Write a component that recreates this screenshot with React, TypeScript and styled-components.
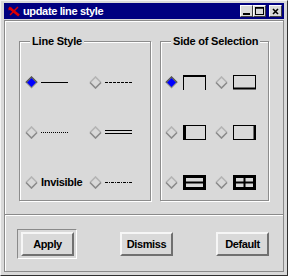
import styled, { createGlobalStyle } from "styled-components";

const GlobalStyle = createGlobalStyle`
  html, body {
    margin: 0;
    padding: 0;
    background: #d9d9d9;
  }
  body {
    font-family: "Liberation Sans", Arial, sans-serif;
  }
`;

const Window = styled.div`
  box-sizing: border-box;
  width: 288px;
  height: 276px;
  background: #d9d9d9;
  border: 1px solid;
  border-color: #f4f4f4 #303030 #303030 #f4f4f4;
  padding: 2px 3px 3px 3px;
  display: flex;
  flex-direction: column;
`;

const TitleBar = styled.div`
  height: 16px;
  flex: none;
  background: #000080;
  display: flex;
  align-items: center;
  padding-left: 4px;
  color: #fff;
`;

const TitleText = styled.span`
  flex: 1;
  margin-left: 3px;
  font-size: 11px;
  font-weight: bold;
  letter-spacing: -0.35px;
  line-height: 16px;
`;

const WinButtons = styled.div`
  display: flex;
  align-items: center;
  margin-right: 2px;
`;

const WinButton = styled.span<{ $gap?: boolean }>`
  box-sizing: border-box;
  width: 13px;
  height: 12px;
  margin-left: ${(p) => (p.$gap ? "3px" : "0")};
  background: #d9d9d9;
  border: 1px solid;
  border-color: #ffffff #404040 #404040 #ffffff;
  display: flex;
  align-items: center;
  justify-content: center;
`;

const Body = styled.div`
  flex: 1;
  margin-top: 1px;
  border: 1px solid #8a8a8a;
  box-shadow: inset 1px 1px 0 #ffffff;
  display: flex;
  flex-direction: column;
`;

const TopSection = styled.div`
  height: 193px;
  padding: 20px 14px 0 14px;
  display: flex;
  gap: 9px;
  box-sizing: border-box;
`;

const Separator = styled.div`
  height: 0;
  border-top: 1px solid #8a8a8a;
  border-bottom: 1px solid #ffffff;
`;

const Group = styled.div<{ $width: number }>`
  box-sizing: border-box;
  position: relative;
  width: ${(p) => p.$width}px;
  height: 160px;
  border: 1px solid #8c8c8c;
  box-shadow: 1px 1px 0 #ffffff, inset 1px 1px 0 #ffffff;
`;

const Legend = styled.span`
  position: absolute;
  top: -7px;
  left: 10px;
  padding: 0 2px;
  background: #d9d9d9;
  font-size: 11px;
  font-weight: bold;
  letter-spacing: -0.2px;
  line-height: 13px;
  color: #000;
  white-space: nowrap;
`;

const OptionGrid = styled.div<{ $col: number; $padLeft: number }>`
  display: grid;
  grid-template-columns: ${(p) => `${p.$col}px ${p.$col}px`};
  grid-auto-rows: 20px;
  row-gap: 30px;
  padding-top: 30px;
  padding-left: ${(p) => p.$padLeft}px;
`;

const Option = styled.div<{ $gap: number }>`
  display: flex;
  align-items: center;
  gap: ${(p) => p.$gap}px;
`;

const OptionLabel = styled.span`
  font-size: 11px;
  font-weight: bold;
  letter-spacing: -0.3px;
  color: #000;
`;

const BottomSection = styled.div`
  flex: 1;
  display: flex;
  align-items: center;
  justify-content: space-between;
  padding: 0 14px 0 12px;
`;

const DefaultRing = styled.div`
  border: 1px solid;
  border-color: #8a8a8a #ffffff #ffffff #8a8a8a;
  padding: 2px 2px 2px 3px;
  display: flex;
`;

const PushButton = styled.button`
  box-sizing: border-box;
  width: 53px;
  height: 24px;
  margin: 0;
  padding: 0;
  background: #d9d9d9;
  border: 2px solid;
  border-color: #f6f6f6 #707070 #707070 #f6f6f6;
  font-family: "Liberation Sans", Arial, sans-serif;
  font-size: 11px;
  font-weight: bold;
  letter-spacing: -0.4px;
  color: #000;
  cursor: pointer;
`;

function Diamond({ selected }: { selected?: boolean }) {
  return (
    <svg width="13" height="13" viewBox="0 0 13 13">
      {selected ? (
        <>
          <polygon points="6.5,0.5 12.5,6.5 6.5,12.5 0.5,6.5" fill="#8a8a8a" />
          <polygon points="6.5,2 11,6.5 6.5,11 2,6.5" fill="#0000ff" />
          <polyline points="0.8,6.5 6.5,0.8 12.2,6.5" fill="none" stroke="#555" strokeWidth="1.2" />
        </>
      ) : (
        <>
          <polyline points="1,6.5 6.5,1 12,6.5" fill="none" stroke="#b4b4b4" strokeWidth="1.6" />
          <polyline points="1,6.5 6.5,12 12,6.5" fill="none" stroke="#8a8a8a" strokeWidth="1.6" />
        </>
      )}
    </svg>
  );
}

function LineSample({ kind }: { kind: string }) {
  return (
    <svg width="27" height="5" viewBox="0 0 27 5">
      {kind === "solid" && <line x1="0" y1="2.5" x2="27" y2="2.5" stroke="#000" />}
      {kind === "dashed" && (
        <line x1="0" y1="2.5" x2="27" y2="2.5" stroke="#000" strokeDasharray="3 1" />
      )}
      {kind === "dotted" && (
        <line x1="0" y1="2.5" x2="27" y2="2.5" stroke="#000" strokeDasharray="1 1" />
      )}
      {kind === "double" && (
        <>
          <line x1="0" y1="0.5" x2="27" y2="0.5" stroke="#000" />
          <line x1="0" y1="3.5" x2="27" y2="3.5" stroke="#000" />
        </>
      )}
      {kind === "dashdot" && (
        <line x1="0" y1="2.5" x2="27" y2="2.5" stroke="#000" strokeDasharray="3 1 1 1" />
      )}
    </svg>
  );
}

function SideIcon({ side }: { side: string }) {
  return (
    <svg width="23" height="15" viewBox="0 0 23 15">
      {side === "top" && (
        <path d="M0.5 15 V1 H22.5 V15" fill="none" stroke="#000" strokeWidth="1" />
      )}
      {side === "top" && <line x1="0" y1="1" x2="23" y2="1" stroke="#000" strokeWidth="2" />}
      {side === "bottom" && (
        <>
          <rect x="0.5" y="0.5" width="22" height="13" fill="none" stroke="#000" />
          <line x1="0" y1="13.5" x2="23" y2="13.5" stroke="#000" strokeWidth="2" />
        </>
      )}
      {side === "left" && (
        <>
          <rect x="0.5" y="0.5" width="22" height="14" fill="none" stroke="#000" />
          <line x1="1.5" y1="0" x2="1.5" y2="15" stroke="#000" strokeWidth="3" />
        </>
      )}
      {side === "right" && (
        <>
          <rect x="0.5" y="0.5" width="22" height="14" fill="none" stroke="#000" />
          <line x1="21.5" y1="0" x2="21.5" y2="15" stroke="#000" strokeWidth="2" />
        </>
      )}
      {side === "split" && (
        <>
          <rect x="1.5" y="1.5" width="20" height="12" fill="none" stroke="#000" strokeWidth="3" />
          <line x1="0" y1="7.5" x2="23" y2="7.5" stroke="#000" strokeWidth="2" />
        </>
      )}
      {side === "grid" && (
        <>
          <rect x="1.5" y="1.5" width="20" height="12" fill="none" stroke="#000" strokeWidth="3" />
          <line x1="0" y1="7.5" x2="23" y2="7.5" stroke="#000" strokeWidth="2" />
          <line x1="11.5" y1="0" x2="11.5" y2="15" stroke="#000" strokeWidth="2" />
        </>
      )}
    </svg>
  );
}

function AppIcon() {
  return (
    <svg width="12" height="11" viewBox="0 0 12 11">
      <path d="M1 1.5 L11 9.5" stroke="#e00000" strokeWidth="2.6" />
      <path d="M10 1 L2 9" stroke="#e00000" strokeWidth="1.4" />
      <path d="M0.5 4 L4 2" stroke="#e00000" strokeWidth="1.2" />
    </svg>
  );
}

const lineOptions = [
  { kind: "solid", selected: true },
  { kind: "dashed" },
  { kind: "dotted" },
  { kind: "double" },
  { kind: "invisible" },
  { kind: "dashdot" },
];

const sideOptions = [
  { side: "top", selected: true },
  { side: "bottom" },
  { side: "left" },
  { side: "right" },
  { side: "split" },
  { side: "grid" },
];

export default function App() {
  return (
    <>
      <GlobalStyle />
      <Window>
        <TitleBar>
          <AppIcon />
          <TitleText>update line style</TitleText>
          <WinButtons>
            <WinButton>
              <svg width="7" height="8" viewBox="0 0 7 8">
                <rect x="0" y="6" width="7" height="2" fill="#000" />
              </svg>
            </WinButton>
            <WinButton>
              <svg width="9" height="8" viewBox="0 0 9 8">
                <rect x="0.5" y="0.5" width="8" height="7" fill="none" stroke="#000" />
                <line x1="0" y1="1" x2="9" y2="1" stroke="#000" strokeWidth="1.5" />
              </svg>
            </WinButton>
            <WinButton $gap>
              <svg width="7" height="7" viewBox="0 0 7 7">
                <path d="M1 1 L6 6 M6 1 L1 6" stroke="#000" strokeWidth="1.6" />
              </svg>
            </WinButton>
          </WinButtons>
        </TitleBar>
        <Body>
          <TopSection>
            <Group $width={132}>
              <Legend>Line Style</Legend>
              <OptionGrid $col={64} $padLeft={5}>
                {lineOptions.map((o) => (
                  <Option key={o.kind} $gap={3}>
                    <Diamond selected={o.selected} />
                    {o.kind === "invisible" ? (
                      <OptionLabel>Invisible</OptionLabel>
                    ) : (
                      <LineSample kind={o.kind} />
                    )}
                  </Option>
                ))}
              </OptionGrid>
            </Group>
            <Group $width={109}>
              <Legend>Side of Selection</Legend>
              <OptionGrid $col={50} $padLeft={4}>
                {sideOptions.map((o) => (
                  <Option key={o.side} $gap={5}>
                    <Diamond selected={o.selected} />
                    <SideIcon side={o.side} />
                  </Option>
                ))}
              </OptionGrid>
            </Group>
          </TopSection>
          <Separator />
          <BottomSection>
            <DefaultRing>
              <PushButton>Apply</PushButton>
            </DefaultRing>
            <PushButton>Dismiss</PushButton>
            <PushButton>Default</PushButton>
          </BottomSection>
        </Body>
      </Window>
    </>
  );
}
